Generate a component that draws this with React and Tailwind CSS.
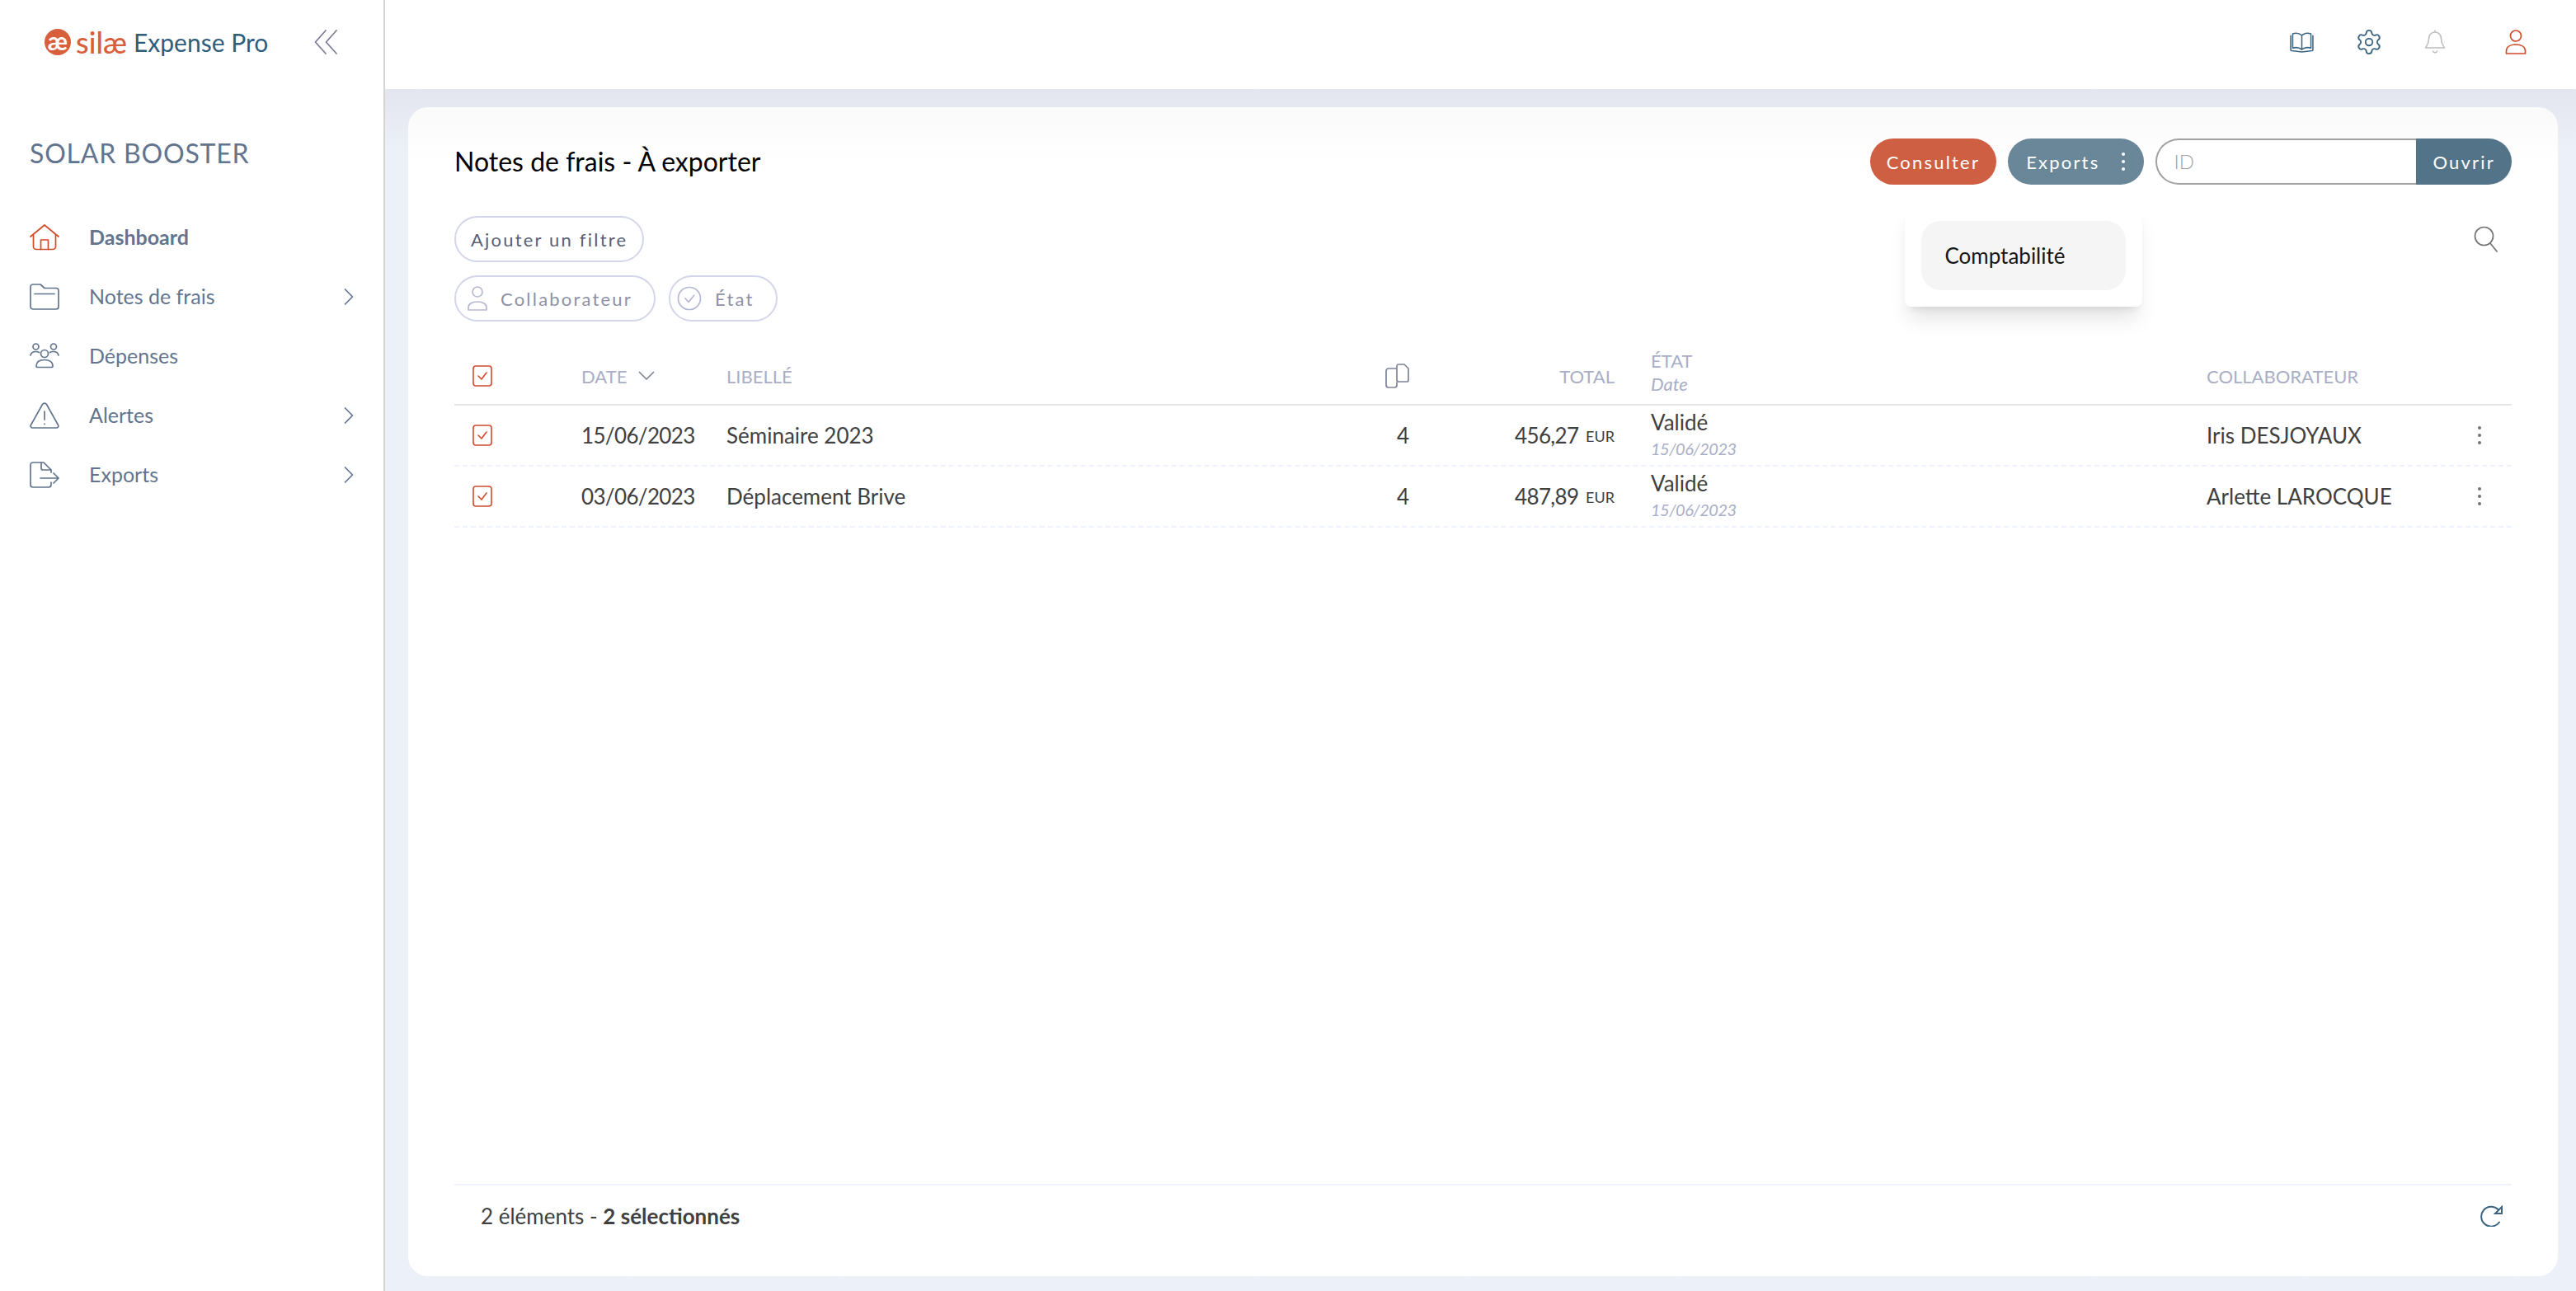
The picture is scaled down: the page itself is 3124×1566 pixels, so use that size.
import React from 'react';
import { Settings } from 'lucide-react';

const navItems = [
  { label: 'Dashboard', icon: HomeIcon, active: true },
  { label: 'Notes de frais', icon: FolderIcon, arrow: true },
  { label: 'Dépenses', icon: GroupIcon },
  { label: 'Alertes', icon: AlertIcon, arrow: true },
  { label: 'Exports', icon: ExportIcon, arrow: true },
];

const rows = [
  { date: '15/06/2023', label: 'Séminaire 2023', count: 4, total: '456,27', state: 'Validé', stateDate: '15/06/2023', user: 'Iris DESJOYAUX' },
  { date: '03/06/2023', label: 'Déplacement Brive', count: 4, total: '487,89', state: 'Validé', stateDate: '15/06/2023', user: 'Arlette LAROCQUE' },
];

function Line({ w, h, className, children }) {
  return (
    <svg width={w} height={h} viewBox={`0 0 ${w} ${h}`} fill="none" stroke="currentColor" strokeWidth="1.7" strokeLinecap="round" strokeLinejoin="round" className={className}>
      {children}
    </svg>
  );
}

function HomeIcon({ className }) {
  return (
    <Line w={36} h={32} className={className}>
      <path d="M1 15 18 1l17 14" />
      <path d="M4.500 12.500V27a3.500 3.500 0 0 0 3.500 3.500h20a3.500 3.500 0 0 0 3.500-3.500V12.500" />
      <path d="M13.500 30.500V19h9v11.500" />
    </Line>
  );
}

function FolderIcon({ className }) {
  return (
    <Line w={36} h={32} className={className}>
      <path d="M1 4a3 3 0 0 1 3-3h9l5 4.500h14a3 3 0 0 1 3 3V28a3 3 0 0 1-3 3H4a3 3 0 0 1-3-3z" />
      <path d="M6 12.500h24" />
    </Line>
  );
}

function GroupIcon({ className }) {
  return (
    <Line w={36} h={32} className={className}>
      <circle cx="7.500" cy="4.500" r="3.500" />
      <circle cx="29" cy="4.500" r="3.500" />
      <circle cx="18" cy="13" r="4.500" />
      <path d="M1 15c.5-3 3-4.500 6.500-4.500 1.500 0 3 .3 4 1" />
      <path d="M35 15c-.5-3-3-4.500-6.500-4.500-1.500 0-3 .3-4 1" />
      <path d="M8 28c0-5 4-7.500 10-7.500s10 2.500 10 7.500c0 1-1 1.500-2 1.500H10c-1 0-2-.5-2-1.500z" />
    </Line>
  );
}

function AlertIcon({ className }) {
  return (
    <Line w={36} h={32} className={className}>
      <path d="M15.500 2.500a3 3 0 0 1 5 0l14 25a2.300 2.300 0 0 1-2 3.500h-29a2.300 2.300 0 0 1-2-3.500z" />
      <path d="M18 11v10M18 26v.5" />
    </Line>
  );
}

function ExportIcon({ className }) {
  return (
    <Line w={36} h={32} className={className}>
      <path d="M26 13V10l-9-9H4a3 3 0 0 0-3 3v24a3 3 0 0 0 3 3h19a3 3 0 0 0 3-3v-3" />
      <path d="M14 1v7a2 2 0 0 0 2 2h10" />
      <path d="M13 20h22M29 14l6 6-6 6" />
    </Line>
  );
}

function ChevronRight() {
  return (
    <Line w={12} h={20} className="text-slate-500">
      <path d="m1.500 1 9 9-9 9" />
    </Line>
  );
}

function Logo() {
  return (
    <div className="ml-13.5 flex items-center">
      <div className="flex size-8 items-center justify-center rounded-full bg-[#d95f3c] pb-1 text-3xl font-bold leading-none text-white">æ</div>
      <span className="ml-1.5 text-4xl font-medium leading-none text-[#d95f3c]">silæ</span>
      <span className="ml-2 text-3xl leading-none text-[#2f5d7c]">Expense Pro</span>
    </div>
  );
}

function Checkbox() {
  return (
    <svg width="24" height="26" viewBox="0 0 24 26" fill="none" stroke="#cf4b2a" strokeWidth="1.6" strokeLinecap="round" strokeLinejoin="round">
      <rect x="1" y="1" width="22" height="24" rx="3" />
      <path d="m7 13 4 4 6-8" />
    </svg>
  );
}

function Kebab({ className }) {
  return (
    <svg width="6" height="24" viewBox="0 0 6 24" fill="currentColor" className={className}>
      <circle cx="3" cy="3" r="2" />
      <circle cx="3" cy="12" r="2" />
      <circle cx="3" cy="21" r="2" />
    </svg>
  );
}

function Sidebar() {
  return (
    <aside className="flex w-[467px] shrink-0 flex-col border-r-2 border-neutral-300 bg-white">
      <div className="flex h-27 items-center justify-between pb-1.5 pr-14">
        <Logo />
        <Line w={28} h={30} className="text-[#7a7a96]">
          <path d="M14 1 1.500 15 14 29M27 1 14.500 15 27 29" />
        </Line>
      </div>
      <h2 className="mt-14.5 pl-9 text-[32px] leading-10 tracking-wide text-slate-500">SOLAR BOOSTER</h2>
      <nav className="mt-11.5 flex flex-col pl-9 pr-9">
        {navItems.map((item) => (
          <div key={item.label} className="flex h-18 items-center text-[25px] text-slate-500">
            <item.icon className={item.active ? 'text-[#cf4b2a]' : 'text-slate-500'} />
            <span className={`ml-9 flex-1 ${item.active ? 'font-bold' : ''}`}>{item.label}</span>
            {item.arrow && <ChevronRight />}
          </div>
        ))}
      </nav>
    </aside>
  );
}

function Topbar() {
  return (
    <header className="flex h-27 shrink-0 items-center justify-end gap-13 bg-white pb-1.5 pr-15">
      <svg width="29" height="25" viewBox="0 0 30 26" fill="none" stroke="#3b6582" strokeWidth="1.6" strokeLinejoin="round">
        <path d="M15 4C12 1.500 7 1 3.500 2v18c3.500-1 8.500-.5 11.500 2 3-2.500 8-3 11.500-2V2C23 1 18 1.500 15 4zM15 4v18" />
        <path d="M1 4v18c0 1 .5 1.500 1.500 1.500L15 25l12.500-1.500c1 0 1.500-.5 1.500-1.500V4" />
      </svg>
      <Settings size={34} strokeWidth={1.3} className="-mx-0.5 text-[#3b6582]" />
      <svg width="26" height="30" viewBox="0 0 26 30" fill="none" stroke="#bdbdbd" strokeWidth="1.6" strokeLinecap="round" strokeLinejoin="round">
        <path d="M13 3c-5 0-7.500 4-7.500 8 0 6-2 8-4 11h23c-2-3-4-5-4-11 0-4-2.500-8-7.500-8zM13 1v2M10.500 26c1 2.500 4 2.500 5 0" />
      </svg>
      <Line w={26} h={30} className="ml-5 text-[#cf4b2a]">
        <circle cx="13" cy="7.500" r="6.500" />
        <path d="M1.500 29v-3c0-5 4.500-8 11.500-8s11.500 3 11.500 8v3z" />
      </Line>
    </header>
  );
}

function Toolbar() {
  return (
    <div className="flex items-center justify-between">
      <h1 className="text-[32px] text-black">Notes de frais - À exporter</h1>
      <div className="flex items-center gap-3.5 text-[22px] tracking-widest text-white">
        <button className="flex h-14 items-center rounded-full bg-[#cf5f42] px-5">Consulter</button>
        <div className="relative">
          <button className="flex h-14 items-center gap-6.5 rounded-full bg-[#6a8799] px-5.5">
            Exports
            <Kebab />
          </button>
          <div className="absolute right-0.5 top-full mt-6 w-72 rounded-lg bg-white p-5 shadow-xl">
            <div className="rounded-3xl bg-neutral-100 px-7 py-6.5 text-[26px] leading-8 tracking-normal text-neutral-900">Comptabilité</div>
          </div>
        </div>
        <div className="flex h-14">
          <div className="flex w-79 items-center rounded-l-full border-2 border-r-0 border-neutral-400 bg-white pl-5 text-2xl font-light tracking-normal text-neutral-400">ID</div>
          <button className="rounded-r-full bg-[#537488] px-5">Ouvrir</button>
        </div>
      </div>
    </div>
  );
}

function Filters() {
  const pill = 'flex h-14 items-center rounded-full border-2 border-[#d3d6ea] text-[22px] tracking-widest';
  return (
    <div className="mt-9.5 flex justify-between">
      <div className="flex flex-col items-start gap-4">
        <button className={`${pill} px-4.5 text-[#5a5f75]`}>Ajouter un filtre</button>
        <div className="flex gap-4">
          <button className={`${pill} gap-4 pl-3.5 pr-6.5 text-[#8d91a8]`}>
            <Line w={24} h={30} className="text-[#b5b8d3]">
              <circle cx="12" cy="7" r="6" />
              <path d="M1 29v-3c0-4 4-7 11-7s11 3 11 7v3z" />
            </Line>
            Collaborateur
          </button>
          <button className={`${pill} gap-4 pl-2 pr-6.5 text-[#8d91a8]`}>
            <Line w={30} h={30} className="text-[#b5b8d3]">
              <circle cx="15" cy="15" r="13.500" />
              <path d="m10 15 4 4.500 6.500-8" />
            </Line>
            État
          </button>
        </div>
      </div>
      <Line w={30} h={32} className="mr-4 mt-3 text-neutral-500">
        <circle cx="12.500" cy="12.500" r="11" />
        <path d="m20 21 8 10" />
      </Line>
    </div>
  );
}

function DataTable() {
  const cols = 'grid grid-cols-[154px_176px_1fr_249px_718px_370px] items-center';
  return (
    <div className="mt-8.5">
      <div className={`${cols} h-17 border-b-2 border-neutral-200 pb-0.5 text-[22px] text-[#a9aec6]`}>
        <div className="pl-5.5"><Checkbox /></div>
        <div className="flex items-center gap-3.5">
          DATE
          <Line w={20} h={12} className="text-[#7f8299]">
            <path d="m1.500 1.500 8.500 8.500 8.500-8.500" />
          </Line>
        </div>
        <div className="flex items-center justify-between">
          LIBELLÉ
          <Line w={30} h={30} className="text-[#7f8299]">
            <path d="M14 6H5a3 3 0 0 0-3 3v17a3 3 0 0 0 3 3h7a3 3 0 0 0 3-3v-3" />
            <path d="M17 1h7l5 5v14a2 2 0 0 1-2 2H17a2 2 0 0 1-2-2V3a2 2 0 0 1 2-2z" fill="white" />
          </Line>
        </div>
        <div className="text-right">TOTAL</div>
        <div className="pb-2 pl-11 leading-7">
          <div>ÉTAT</div>
          <div className="italic">Date</div>
        </div>
        <div>COLLABORATEUR</div>
      </div>
      {rows.map((row) => (
        <div key={row.date} className={`${cols} h-18.5 border-b-2 border-dashed border-indigo-50 text-[26px] text-neutral-700`}>
          <div className="pl-5.5"><Checkbox /></div>
          <div className="tracking-tight">{row.date}</div>
          <div className="flex items-center justify-between">
            <span>{row.label}</span>
            <span>{row.count}</span>
          </div>
          <div className="text-right">
            <span className="tracking-tight">{row.total}</span> <span className="ml-0.5 align-[2px] text-lg">EUR</span>
          </div>
          <div className="pl-11">
            <div className="leading-8">{row.state}</div>
            <div className="text-xl italic leading-8 tracking-tight text-[#a9aec6]">{row.stateDate}</div>
          </div>
          <div className="flex items-center justify-between pr-9">
            <span>{row.user}</span>
            <Kebab className="text-neutral-500" />
          </div>
        </div>
      ))}
    </div>
  );
}

export default function App() {
  return (
    <div className="flex h-screen bg-white font-[Lato,sans-serif]">
      <Sidebar />
      <div className="flex min-w-0 flex-1 flex-col">
        <Topbar />
        <main className="flex flex-1 flex-col bg-linear-to-b from-[#e3e5ef] to-[#ecf0f8] to-5% pb-4.5 pl-7 pr-5.5 pt-5.5">
          <section className="flex flex-1 flex-col rounded-3xl bg-linear-to-b from-neutral-50 to-white to-5% pb-9 pl-14 pr-14 pt-9.5">
            <Toolbar />
            <Filters />
            <div className="flex-1">
              <DataTable />
            </div>
            <footer className="flex h-19 items-center justify-between border-t-2 border-indigo-50 pl-8 pr-2.5 text-[26px] text-neutral-700">
              <div>
                2 éléments - <b>2 sélectionnés</b>
              </div>
              <svg width="28" height="26" viewBox="0 0 28 26" fill="none" stroke="#3b6582" strokeWidth="2" strokeLinecap="round">
                <path d="M23 20.500A12 12 0 1 1 21.500 5" />
                <path d="M26 2v8h-8z" />
              </svg>
            </footer>
          </section>
        </main>
      </div>
    </div>
  );
}
